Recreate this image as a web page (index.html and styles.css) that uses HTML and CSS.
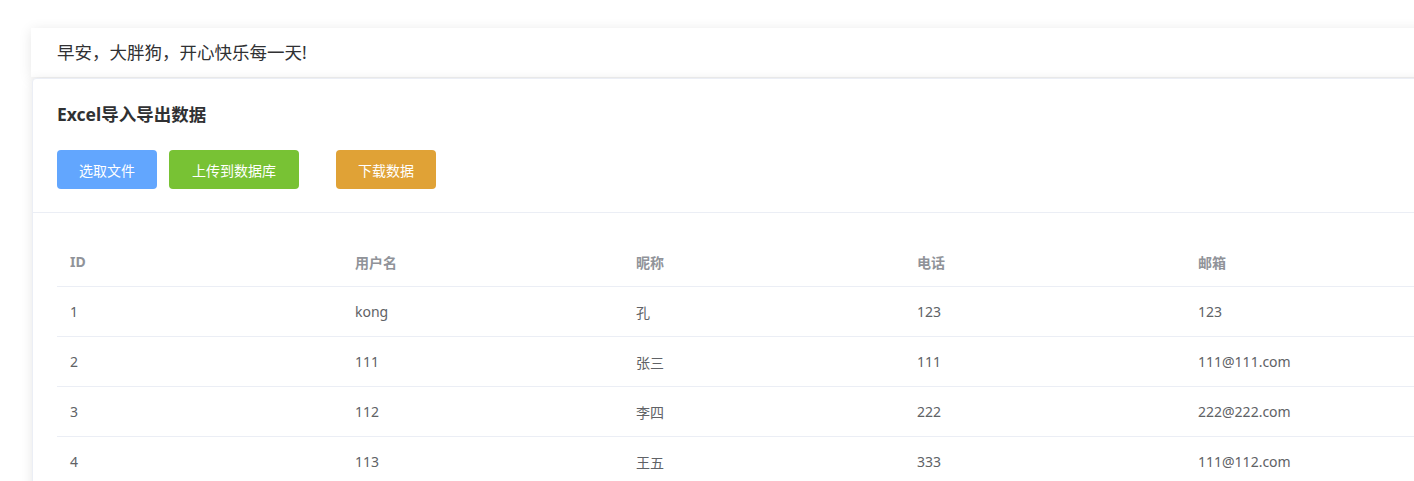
FILE: index.html
```html
<!DOCTYPE html>
<html lang="zh-CN">
<head>
<meta charset="utf-8">
<title>Excel导入导出数据</title>
<link rel="stylesheet" href="styles.css">
</head>
<body>
<div class="page">
  <div class="greeting">早安，大胖狗，开心快乐每一天!</div>
  <div class="card">
    <div class="card-header">
      <div class="title">Excel导入导出数据</div>
      <div class="actions">
        <button class="btn btn-blue">选取文件</button>
        <button class="btn btn-green">上传到数据库</button>
        <button class="btn btn-orange">下载数据</button>
      </div>
    </div>
    <div class="card-body">
      <table class="data-table">
        <colgroup>
          <col class="c1"><col class="c2"><col class="c3"><col class="c4"><col class="c5">
        </colgroup>
        <thead>
          <tr><th>ID</th><th>用户名</th><th>昵称</th><th>电话</th><th>邮箱</th></tr>
        </thead>
        <tbody>
          <tr><td>1</td><td>kong</td><td>孔</td><td>123</td><td>123</td></tr>
          <tr><td>2</td><td>111</td><td>张三</td><td>111</td><td>111@111.com</td></tr>
          <tr><td>3</td><td>112</td><td>李四</td><td>222</td><td>222@222.com</td></tr>
          <tr><td>4</td><td>113</td><td>王五</td><td>333</td><td>111@112.com</td></tr>
        </tbody>
      </table>
    </div>
  </div>
</div>
</body>
</html>
```
FILE: styles.css
```css
html, body {
  margin: 0;
  padding: 0;
  background: #ffffff;
  overflow: hidden;
}
body {
  font-family: "Noto Sans", "Noto Sans CJK SC", sans-serif;
  color: #303133;
}
.page {
  width: 1462px;
  padding: 28px 0 0 31px;
}
.greeting {
  height: 49px;
  line-height: 49px;
  margin-bottom: 1px;
  padding-left: 26px;
  font-size: 17.5px;
  color: #303133;
  background: #ffffff;
  box-shadow: 0 2px 12px 0 rgba(0, 0, 0, 0.1);
}
.card {
  margin-left: 1px;
  background: #ffffff;
  border: 1px solid #ebeef5;
  border-radius: 4px;
  box-shadow: 0 2px 12px 0 rgba(0, 0, 0, 0.1);
}
.card-header {
  padding: 23px 24px 23px;
  border-bottom: 1px solid #ebeef5;
}
.title {
  font-size: 17.5px;
  font-weight: 700;
  line-height: 24px;
  color: #303133;
}
.actions {
  display: flex;
  margin-top: 24px;
}
.btn {
  height: 39px;
  padding: 0 22px;
  border: none;
  border-radius: 4px;
  font-family: "Noto Sans", "Noto Sans CJK SC", sans-serif;
  font-size: 14px;
  color: #ffffff;
  cursor: pointer;
}
.btn-blue { background: #62a6fe; }
.btn-green { background: #78c234; margin-left: 12px; padding: 0 23px; }
.btn-orange { background: #e0a236; margin-left: 37px; }
.card-body {
  padding: 23px 24px 20px;
}
.data-table {
  width: 100%;
  border-collapse: collapse;
  table-layout: fixed;
  font-size: 14px;
}
.c1 { width: 285px; }
.c2, .c3, .c4 { width: 281px; }
.data-table th,
.data-table td {
  height: 50px;
  padding: 0 13px;
  text-align: left;
  border-bottom: 1px solid #ebeef5;
  box-sizing: border-box;
}
.data-table th {
  color: #909399;
  font-weight: 700;
  padding-top: 2px;
}
.data-table td {
  color: #606266;
  padding-top: 1px;
}
```
